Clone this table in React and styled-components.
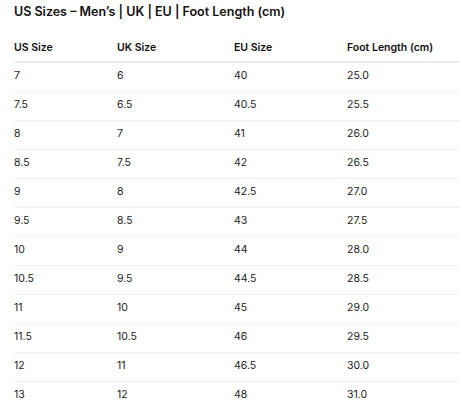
import React from "react";
import styled, { createGlobalStyle } from "styled-components";

const Global = createGlobalStyle`
  html, body { margin: 0; padding: 0; background: #fff; }
  body { font-family: Inter, "Noto Sans", sans-serif; color: #1a1a1a; }
`;

const Page = styled.div`
  padding: 4px 0 0 14px;
`;

const Title = styled.h2`
  margin: 0 0 14px 0;
  font-size: 12.5px;
  line-height: 16px;
  font-weight: 600;
  color: #111;
`;

const Table = styled.table`
  width: 446px;
  border-collapse: collapse;
  table-layout: fixed;
`;

const Col = styled.col`
  width: ${(p) => p.$w}px;
`;

const Th = styled.th`
  text-align: left;
  font-size: 10.5px;
  line-height: 12px;
  font-weight: 600;
  color: #111;
  padding: 8px 0 7px 0;
  border-bottom: 2px solid #ececec;
`;

const Td = styled.td`
  font-size: 10.5px;
  line-height: 12px;
  font-weight: 400;
  color: #222;
  padding: 7px 0 9px 0;
  border-bottom: 1px solid #f1f1f1;
`;

const Row = styled.tr`
  &:last-child td { border-bottom: none; }
`;

const rows = [
  ["7", "6", "40", "25.0"],
  ["7.5", "6.5", "40.5", "25.5"],
  ["8", "7", "41", "26.0"],
  ["8.5", "7.5", "42", "26.5"],
  ["9", "8", "42.5", "27.0"],
  ["9.5", "8.5", "43", "27.5"],
  ["10", "9", "44", "28.0"],
  ["10.5", "9.5", "44.5", "28.5"],
  ["11", "10", "45", "29.0"],
  ["11.5", "10.5", "46", "29.5"],
  ["12", "11", "46.5", "30.0"],
  ["13", "12", "48", "31.0"],
];

export default function App() {
  return (
    <Page>
      <Global />
      <Title>US Sizes – Men’s | UK | EU | Foot Length (cm)</Title>
      <Table>
        <colgroup>
          <Col $w={103} />
          <Col $w={117} />
          <Col $w={113} />
          <Col $w={113} />
        </colgroup>
        <thead>
          <tr>
            <Th>US Size</Th>
            <Th>UK Size</Th>
            <Th>EU Size</Th>
            <Th>Foot Length (cm)</Th>
          </tr>
        </thead>
        <tbody>
          {rows.map((r) => (
            <Row key={r[0]}>
              {r.map((c, i) => (
                <Td key={i}>{c}</Td>
              ))}
            </Row>
          ))}
        </tbody>
      </Table>
    </Page>
  );
}
